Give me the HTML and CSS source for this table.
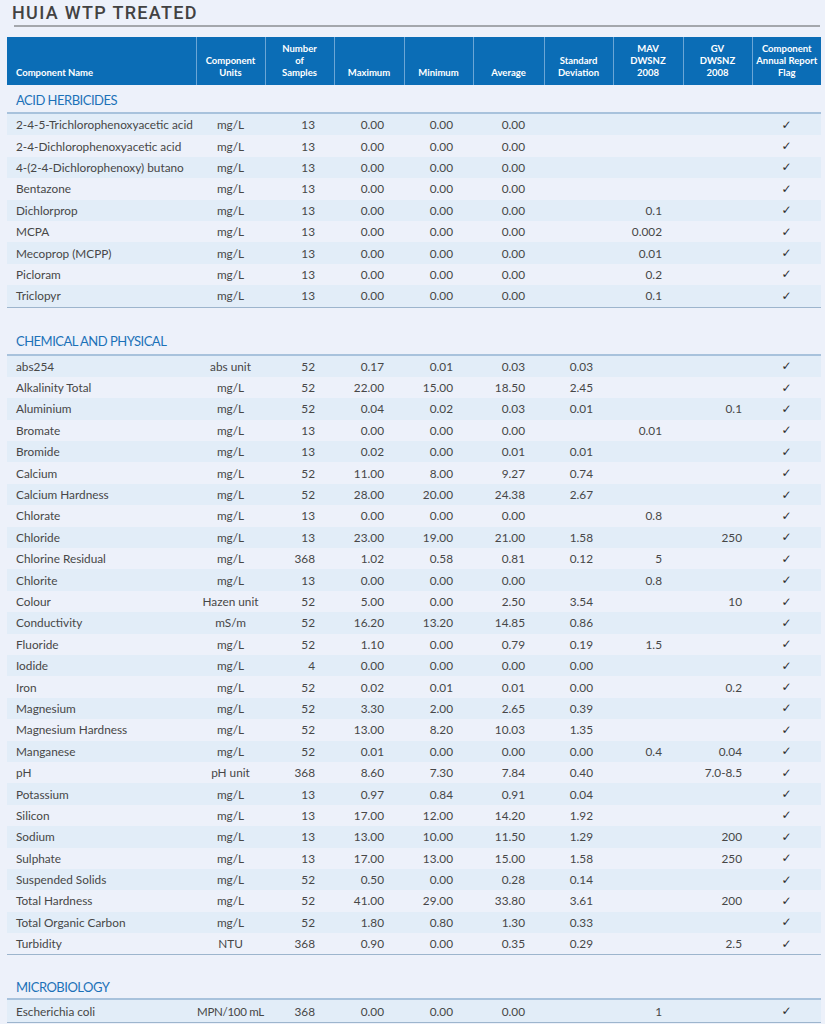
FILE: index.html
```html
<!DOCTYPE html>
<html>
<head>
<meta charset="utf-8">
<link rel="stylesheet" href="styles.css">
</head>
<body>
<div class="page">
  <h1 class="title">HUIA WTP TREATED</h1>
  <table class="data">
    <colgroup>
      <col class="c-name"><col class="c-units"><col class="c-num"><col class="c-max"><col class="c-min"><col class="c-avg"><col class="c-sd"><col class="c-mav"><col class="c-gv"><col class="c-flag">
    </colgroup>
    <thead>
      <tr>
        <th class="h-name">Component Name</th>
        <th>Component<br>Units</th>
        <th>Number<br>of<br>Samples</th>
        <th>Maximum</th>
        <th>Minimum</th>
        <th>Average</th>
        <th>Standard<br>Deviation</th>
        <th>MAV<br>DWSNZ<br>2008</th>
        <th>GV<br>DWSNZ<br>2008</th>
        <th>Component<br>Annual Report<br>Flag</th>
      </tr>
    </thead>
    <tbody class="section">
      <tr class="sec-head"><td colspan="10">ACID HERBICIDES</td></tr>
      <tr><td>2-4-5-Trichlorophenoxyacetic acid</td><td>mg/L</td><td>13</td><td>0.00</td><td>0.00</td><td>0.00</td><td></td><td></td><td></td><td>✓</td></tr>
      <tr><td>2-4-Dichlorophenoxyacetic acid</td><td>mg/L</td><td>13</td><td>0.00</td><td>0.00</td><td>0.00</td><td></td><td></td><td></td><td>✓</td></tr>
      <tr><td>4-(2-4-Dichlorophenoxy) butano</td><td>mg/L</td><td>13</td><td>0.00</td><td>0.00</td><td>0.00</td><td></td><td></td><td></td><td>✓</td></tr>
      <tr><td>Bentazone</td><td>mg/L</td><td>13</td><td>0.00</td><td>0.00</td><td>0.00</td><td></td><td></td><td></td><td>✓</td></tr>
      <tr><td>Dichlorprop</td><td>mg/L</td><td>13</td><td>0.00</td><td>0.00</td><td>0.00</td><td></td><td>0.1</td><td></td><td>✓</td></tr>
      <tr><td>MCPA</td><td>mg/L</td><td>13</td><td>0.00</td><td>0.00</td><td>0.00</td><td></td><td>0.002</td><td></td><td>✓</td></tr>
      <tr><td>Mecoprop (MCPP)</td><td>mg/L</td><td>13</td><td>0.00</td><td>0.00</td><td>0.00</td><td></td><td>0.01</td><td></td><td>✓</td></tr>
      <tr><td>Picloram</td><td>mg/L</td><td>13</td><td>0.00</td><td>0.00</td><td>0.00</td><td></td><td>0.2</td><td></td><td>✓</td></tr>
      <tr class="last"><td>Triclopyr</td><td>mg/L</td><td>13</td><td>0.00</td><td>0.00</td><td>0.00</td><td></td><td>0.1</td><td></td><td>✓</td></tr>
    </tbody>
    <tbody class="section spaced">
      <tr class="sec-head"><td colspan="10">CHEMICAL AND PHYSICAL</td></tr>
      <tr><td>abs254</td><td>abs unit</td><td>52</td><td>0.17</td><td>0.01</td><td>0.03</td><td>0.03</td><td></td><td></td><td>✓</td></tr>
      <tr><td>Alkalinity Total</td><td>mg/L</td><td>52</td><td>22.00</td><td>15.00</td><td>18.50</td><td>2.45</td><td></td><td></td><td>✓</td></tr>
      <tr><td>Aluminium</td><td>mg/L</td><td>52</td><td>0.04</td><td>0.02</td><td>0.03</td><td>0.01</td><td></td><td>0.1</td><td>✓</td></tr>
      <tr><td>Bromate</td><td>mg/L</td><td>13</td><td>0.00</td><td>0.00</td><td>0.00</td><td></td><td>0.01</td><td></td><td>✓</td></tr>
      <tr><td>Bromide</td><td>mg/L</td><td>13</td><td>0.02</td><td>0.00</td><td>0.01</td><td>0.01</td><td></td><td></td><td>✓</td></tr>
      <tr><td>Calcium</td><td>mg/L</td><td>52</td><td>11.00</td><td>8.00</td><td>9.27</td><td>0.74</td><td></td><td></td><td>✓</td></tr>
      <tr><td>Calcium Hardness</td><td>mg/L</td><td>52</td><td>28.00</td><td>20.00</td><td>24.38</td><td>2.67</td><td></td><td></td><td>✓</td></tr>
      <tr><td>Chlorate</td><td>mg/L</td><td>13</td><td>0.00</td><td>0.00</td><td>0.00</td><td></td><td>0.8</td><td></td><td>✓</td></tr>
      <tr><td>Chloride</td><td>mg/L</td><td>13</td><td>23.00</td><td>19.00</td><td>21.00</td><td>1.58</td><td></td><td>250</td><td>✓</td></tr>
      <tr><td>Chlorine Residual</td><td>mg/L</td><td>368</td><td>1.02</td><td>0.58</td><td>0.81</td><td>0.12</td><td>5</td><td></td><td>✓</td></tr>
      <tr><td>Chlorite</td><td>mg/L</td><td>13</td><td>0.00</td><td>0.00</td><td>0.00</td><td></td><td>0.8</td><td></td><td>✓</td></tr>
      <tr><td>Colour</td><td>Hazen unit</td><td>52</td><td>5.00</td><td>0.00</td><td>2.50</td><td>3.54</td><td></td><td>10</td><td>✓</td></tr>
      <tr><td>Conductivity</td><td>mS/m</td><td>52</td><td>16.20</td><td>13.20</td><td>14.85</td><td>0.86</td><td></td><td></td><td>✓</td></tr>
      <tr><td>Fluoride</td><td>mg/L</td><td>52</td><td>1.10</td><td>0.00</td><td>0.79</td><td>0.19</td><td>1.5</td><td></td><td>✓</td></tr>
      <tr><td>Iodide</td><td>mg/L</td><td>4</td><td>0.00</td><td>0.00</td><td>0.00</td><td>0.00</td><td></td><td></td><td>✓</td></tr>
      <tr><td>Iron</td><td>mg/L</td><td>52</td><td>0.02</td><td>0.01</td><td>0.01</td><td>0.00</td><td></td><td>0.2</td><td>✓</td></tr>
      <tr><td>Magnesium</td><td>mg/L</td><td>52</td><td>3.30</td><td>2.00</td><td>2.65</td><td>0.39</td><td></td><td></td><td>✓</td></tr>
      <tr><td>Magnesium Hardness</td><td>mg/L</td><td>52</td><td>13.00</td><td>8.20</td><td>10.03</td><td>1.35</td><td></td><td></td><td>✓</td></tr>
      <tr><td>Manganese</td><td>mg/L</td><td>52</td><td>0.01</td><td>0.00</td><td>0.00</td><td>0.00</td><td>0.4</td><td>0.04</td><td>✓</td></tr>
      <tr><td>pH</td><td>pH unit</td><td>368</td><td>8.60</td><td>7.30</td><td>7.84</td><td>0.40</td><td></td><td>7.0-8.5</td><td>✓</td></tr>
      <tr><td>Potassium</td><td>mg/L</td><td>13</td><td>0.97</td><td>0.84</td><td>0.91</td><td>0.04</td><td></td><td></td><td>✓</td></tr>
      <tr><td>Silicon</td><td>mg/L</td><td>13</td><td>17.00</td><td>12.00</td><td>14.20</td><td>1.92</td><td></td><td></td><td>✓</td></tr>
      <tr><td>Sodium</td><td>mg/L</td><td>13</td><td>13.00</td><td>10.00</td><td>11.50</td><td>1.29</td><td></td><td>200</td><td>✓</td></tr>
      <tr><td>Sulphate</td><td>mg/L</td><td>13</td><td>17.00</td><td>13.00</td><td>15.00</td><td>1.58</td><td></td><td>250</td><td>✓</td></tr>
      <tr><td>Suspended Solids</td><td>mg/L</td><td>52</td><td>0.50</td><td>0.00</td><td>0.28</td><td>0.14</td><td></td><td></td><td>✓</td></tr>
      <tr><td>Total Hardness</td><td>mg/L</td><td>52</td><td>41.00</td><td>29.00</td><td>33.80</td><td>3.61</td><td></td><td>200</td><td>✓</td></tr>
      <tr><td>Total Organic Carbon</td><td>mg/L</td><td>52</td><td>1.80</td><td>0.80</td><td>1.30</td><td>0.33</td><td></td><td></td><td>✓</td></tr>
      <tr class="last"><td>Turbidity</td><td>NTU</td><td>368</td><td>0.90</td><td>0.00</td><td>0.35</td><td>0.29</td><td></td><td>2.5</td><td>✓</td></tr>
    </tbody>
    <tbody class="section spaced short">
      <tr class="sec-head"><td colspan="10">MICROBIOLOGY</td></tr>
      <tr class="last"><td>Escherichia coli</td><td class="narrow">MPN/100 mL</td><td>368</td><td>0.00</td><td>0.00</td><td>0.00</td><td></td><td>1</td><td></td><td>✓</td></tr>
    </tbody>
  </table>
</div>
</body>
</html>
```

FILE: styles.css
```css
html, body {
  margin: 0;
  padding: 0;
  background: #edf1fa;
}

.page {
  padding: 0 4px 0 7px;
  font-family: Lato, "Open Sans", sans-serif;
  color: #474747;
}

.title {
  margin: 0 1px 10px 7px;
  padding: 0;
  text-indent: -2px;
  font-family: Roboto, "Liberation Sans", sans-serif;
  font-weight: 500;
  font-size: 18px;
  letter-spacing: 1.3px;
  line-height: 25px;
  color: #424242;
  border-bottom: 2px solid #a4a7ac;
}

.data {
  width: 814px;
  table-layout: fixed;
  border-collapse: collapse;
}

.c-name { width: 189px; }
.c-units { width: 69px; }
.c-num { width: 69px; }
.c-max { width: 70px; }
.c-min { width: 69px; }
.c-avg { width: 71px; }
.c-sd { width: 69px; }
.c-mav { width: 70px; }
.c-gv { width: 69px; }
.c-flag { width: 69px; }

thead th {
  background: #0b6db6;
  color: #ffffff;
  font-size: 9.5px;
  font-weight: 700;
  line-height: 12px;
  height: 48px;
  padding: 0 2px 6px;
  box-sizing: border-box;
  vertical-align: bottom;
  text-align: center;
  border-left: 1px solid #6ba6d6;
}

thead th.h-name {
  text-align: left;
  padding-left: 9px;
  border-left: none;
}

tbody td {
  font-size: 11.8px;
  height: 21.4px;
  padding: 0;
  vertical-align: middle;
  white-space: nowrap;
}

tbody td.narrow {
  letter-spacing: -0.3px;
  font-size: 11.5px;
}

tbody tr:nth-child(even) td {
  background: #e2edf8;
}

tbody td:nth-child(1) { padding-left: 9px; text-align: left; overflow: hidden; }
tbody td:nth-child(2) { text-align: center; }
tbody td:nth-child(3) { text-align: right; padding-right: 19px; }
tbody td:nth-child(4) { text-align: right; padding-right: 20px; }
tbody td:nth-child(5) { text-align: right; padding-right: 20px; }
tbody td:nth-child(6) { text-align: right; padding-right: 19px; }
tbody td:nth-child(7) { text-align: right; padding-right: 20px; }
tbody td:nth-child(8) { text-align: right; padding-right: 21px; }
tbody td:nth-child(9) { text-align: right; padding-right: 10px; }
tbody td:nth-child(10) {
  text-align: center;
  font-family: "DejaVu Sans", sans-serif;
  font-size: 12px;
  color: #2e2e2e;
}

tbody tr.sec-head td {
  background: transparent;
  box-sizing: content-box;
  height: 25px;
  font-size: 13px;
  letter-spacing: -0.5px;
  color: #1c71b8;
  text-align: left;
  padding: 2px 0 0 9px;
  border-bottom: 2px solid #a8c2dc;
  font-family: Lato, "Open Sans", sans-serif;
}

tbody.spaced tr.sec-head td {
  height: 26px;
  padding-top: 20px;
}

tbody.spaced.short tr.sec-head td {
  height: 23px;
  padding-top: 20px;
}

tbody tr.last td {
  border-bottom: 1px solid #9db5cd;
}
```
